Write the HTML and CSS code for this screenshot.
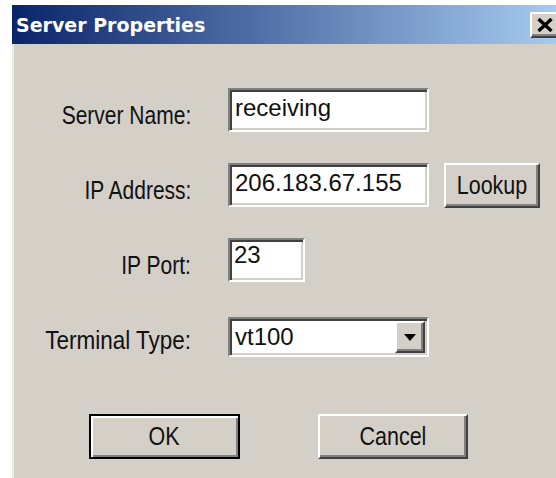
FILE: index.html
```html
<!DOCTYPE html>
<html lang="en">
<head>
<meta charset="utf-8">
<title>Server Properties</title>
<link rel="stylesheet" href="styles.css">
</head>
<body>
<div class="window">
  <div class="titlebar">
    <span class="title">Server Properties</span>
    <div class="close" role="button" aria-label="Close">
      <svg width="16" height="14" viewBox="0 0 16 14">
        <path d="M1.5 1 L14.5 13 M14.5 1 L1.5 13" stroke="#000" stroke-width="3.4" fill="none"/>
      </svg>
    </div>
  </div>
  <div class="body">
    <div class="form">
      <div class="label"><span>Server Name:</span></div>
      <div class="field"><div class="edit wide">receiving</div></div>

      <div class="label"><span>IP Address:</span></div>
      <div class="field">
        <div class="edit wide">206.183.67.155</div>
        <div class="btn lookup"><span>Lookup</span></div>
      </div>

      <div class="label"><span>IP Port:</span></div>
      <div class="field"><div class="edit port">23</div></div>

      <div class="label loose"><span>Terminal Type:</span></div>
      <div class="field">
        <div class="combo">
          <span class="combo-text">vt100</span>
          <div class="combo-arrow">
            <svg width="12" height="7" viewBox="0 0 12 7"><path d="M0 0 H12 L6 7 Z" fill="#000"/></svg>
          </div>
        </div>
      </div>
    </div>
    <div class="actions">
      <div class="btn push default"><span>OK</span></div>
      <div class="btn push"><span>Cancel</span></div>
    </div>
  </div>
</div>
</body>
</html>
```

FILE: styles.css
```css
html, body {
  margin: 0;
  padding: 0;
  background: #fff;
}

.window {
  margin: 5px 0 0 12px;
  width: 544px;
  height: 473px;
  overflow: hidden;
  background: #d4d0c8;
  font-family: "Liberation Sans", Arial, sans-serif;
  color: #000;
}

/* caption bar */
.titlebar {
  height: 39px;
  display: flex;
  align-items: center;
  justify-content: space-between;
  background: linear-gradient(to right, #0a246a, #a6caf0);
}

.title {
  padding-left: 4px;
  font-family: "DejaVu Sans", sans-serif;
  font-weight: bold;
  font-size: 19px;
  color: #fff;
}

.close {
  box-sizing: border-box;
  width: 32px;
  height: 26px;
  margin-right: -6px;
  margin-top: 1px;
  display: flex;
  align-items: center;
  justify-content: center;
  background: #d4d0c8;
  border: 2px solid;
  border-color: #fff #404040 #404040 #fff;
  box-shadow: inset -2px -2px #808080;
  padding-right: 3px;
}

/* dialog client area */
.body {
  height: 434px;
  box-shadow: inset 2px 0 #ebe9e4;
}

.form {
  display: grid;
  grid-template-columns: 179px auto;
  grid-auto-rows: 44px;
  column-gap: 37px;
  row-gap: 31px;
  padding-top: 44px;
}

/* the dialog font is a tall, narrow sans */
.label {
  align-self: start;
  text-align: right;
  font-size: 25px;
  line-height: 28px;
  padding-top: 13px;
  color: #111;
}

.label span {
  display: inline-block;
  transform: scaleX(0.84);
  transform-origin: right center;
}

.label.loose span {
  transform: scaleX(0.9);
}

.field {
  display: flex;
  align-items: flex-start;
  gap: 15px;
}

/* sunken edit controls */
.edit, .combo {
  box-sizing: border-box;
  background: #fff;
  border: 2px solid;
  border-color: #808080 #fff #fff #808080;
  box-shadow: inset 2px 2px #404040, inset -2px -2px #d4d0c8;
  font-size: 24px;
  line-height: 24px;
  color: #111;
}

.edit {
  height: 44px;
  padding: 6px 5px 0;
}

.edit.wide { width: 201px; }
.edit.port { width: 77px; padding: 3px 4px 0; }

.combo {
  width: 201px;
  height: 40px;
  margin-top: 4px;
  display: flex;
  padding: 2px 2px 2px 5px;
  justify-content: space-between;
}

.combo-text {
  padding-top: 4px;
}

.combo-arrow {
  box-sizing: border-box;
  width: 30px;
  display: flex;
  align-items: center;
  justify-content: center;
  background: #d4d0c8;
  border: 2px solid;
  border-color: #fff #404040 #404040 #fff;
  box-shadow: inset -2px -2px #808080;
}

/* raised push buttons */
.btn {
  box-sizing: border-box;
  display: flex;
  align-items: center;
  justify-content: center;
  background: #d4d0c8;
  border: 2px solid;
  border-color: #fff #404040 #404040 #fff;
  box-shadow: inset -2px -2px #808080;
  font-size: 25px;
  color: #111;
}

.btn span {
  display: inline-block;
  transform: scaleX(0.86);
}

.btn.lookup {
  width: 96px;
  height: 45px;
}

.actions {
  display: flex;
  gap: 78px;
  padding-left: 77px;
  margin-top: 57px;
}

.btn.push {
  width: 150px;
  height: 45px;
}

.btn.default {
  width: 151px;
  border-color: #000;
  box-shadow: inset 2px 2px #fff, inset -2px -2px #808080;
}
```
